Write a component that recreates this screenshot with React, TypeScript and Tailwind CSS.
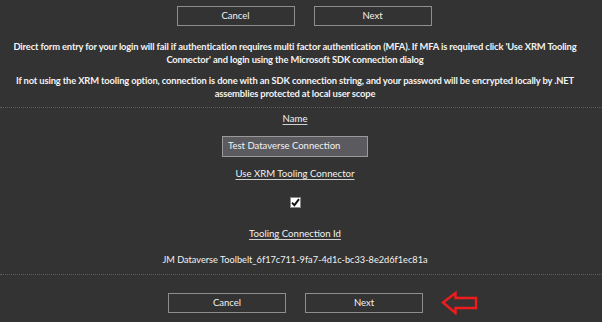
function FormButton({ label }: { label: string }) {
  return (
    <button className="w-[118px] h-[20px] border border-[#8e8e8e] bg-[#333333] text-[9.5px] leading-none text-[#f2f2f2]">
      {label}
    </button>
  );
}

function Label({ text }: { text: string }) {
  return (
    <div className="text-[9.6px] leading-[14px] underline underline-offset-2 decoration-[#d0d0d0]">
      {text}
    </div>
  );
}

function RedArrow() {
  return (
    <svg width="38" height="24" viewBox="0 0 38 24" className="ml-[18px]">
      <polygon
        points="2,11.5 14.5,2 14.5,7 35,7 35,17 14.5,17 14.5,22"
        fill="none"
        stroke="#ee1c1c"
        strokeWidth="2.4"
        strokeLinejoin="miter"
      />
    </svg>
  );
}

export default function App() {
  return (
    <div className="w-[602px] h-[322px] overflow-hidden bg-[#333333] text-[#f2f2f2] font-['Lato',sans-serif] flex flex-col">
      {/* top buttons */}
      <div className="flex justify-center gap-[19px] pt-[6px] pl-[18px] pr-[12px]">
        <FormButton label="Cancel" />
        <FormButton label="Next" />
      </div>

      {/* MFA notes */}
      <div className="w-[590px] text-center font-bold text-[9.4px] tracking-[-0.15px] leading-[13px]">
        <p className="mt-[14px]">
          Direct form entry for your login will fail if authentication requires multi factor
          authentication (MFA). If MFA is required click 'Use XRM Tooling Connector' and login
          using the Microsoft SDK connection dialog
        </p>
        <p className="mt-[8px]">
          If not using the XRM tooling option, connection is done with an SDK connection string,
          and your password will be encrypted locally by .NET assemblies protected at local user
          scope
        </p>
      </div>

      <div className="mt-[7px] border-t border-dotted border-[#5c5c5c]" />

      {/* form fields */}
      <div className="flex flex-col items-center pr-[12px]">
        <div className="mt-[4px]">
          <Label text="Name" />
        </div>
        <div className="mt-[10px] w-[146px] h-[21px] bg-[#5b5b5f] border border-[#9a9a9a] flex items-center px-[5px] text-[9.5px] whitespace-nowrap">
          Test Dataverse Connection
        </div>
        <div className="mt-[10px]">
          <Label text="Use XRM Tooling Connector" />
        </div>
        <div className="mt-[16px] w-[11px] h-[11px] bg-white border border-[#8a8a8a] flex items-center justify-center">
          <svg width="9" height="9" viewBox="0 0 9 9">
            <path d="M1 4.6 L3.4 7.2 L8 1.2" fill="none" stroke="#111" strokeWidth="1.9" />
          </svg>
        </div>
        <div className="mt-[19px]">
          <Label text="Tooling Connection Id" />
        </div>
        <div className="mt-[12px] text-[9.2px] leading-[14px]">
          JM Dataverse Toolbelt_6f17c711-9fa7-4d1c-bc33-8e2d6f1ec81a
        </div>
      </div>

      <div className="mt-[7px] border-t border-dotted border-[#5c5c5c]" />

      {/* bottom buttons */}
      <div className="mt-[16px] flex items-center pl-[168px]">
        <FormButton label="Cancel" />
        <div className="w-[19px]" />
        <FormButton label="Next" />
        <RedArrow />
      </div>
    </div>
  );
}
